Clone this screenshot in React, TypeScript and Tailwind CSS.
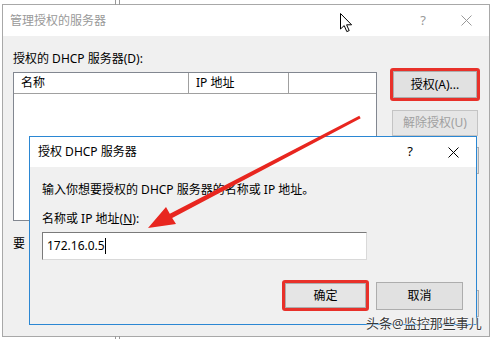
import React from "react";

const CloseIcon = ({ color }: { color: string }) => (
  <svg width="11" height="11" viewBox="0 0 11 11">
    <path d="M0.5 0.5 L10.5 10.5 M10.5 0.5 L0.5 10.5" stroke={color} strokeWidth="1" fill="none" />
  </svg>
);

const Cursor = () => (
  <svg width="13" height="20" viewBox="0 0 13 20" className="absolute left-[340px] top-[13px]">
    <path
      d="M0.5 0.5 L0.5 16 L4.2 12.6 L6.8 18.6 L9.2 17.6 L6.6 11.8 L11.6 11.8 Z"
      fill="#fff"
      stroke="#000"
      strokeWidth="1"
      strokeLinejoin="round"
    />
  </svg>
);

const RedArrow = () => (
  <svg width="492" height="339" className="absolute left-0 top-0 pointer-events-none">
    <polygon
      points="148,228 176,224 172.2,218.1 360.7,118.3 359.3,115.7 169.8,213.7 166,207"
      fill="#e8261f"
    />
  </svg>
);

const App = () => {
  return (
    <div className="relative w-[492px] h-[339px] bg-white overflow-hidden font-['Noto_Sans','Noto_Sans_CJK_SC',sans-serif] text-[12px] text-black">
      {/* resize marks on the window edges */}
      <div className="absolute left-[115px] top-0 h-[5px] w-[5px] border-x border-[#999]" />
      <div className="absolute left-[115px] top-[336px] h-[3px] w-[5px] border-x border-[#999]" />

      {/* main window */}
      <div className="ml-[2px] mt-[4px] w-[488px] h-[333px] border border-[#a8a8a8] flex flex-col">
        <div className="h-[31px] bg-white flex items-center pl-[7px] text-[#999]">
          <span className="leading-[16px]">管理授权的服务器</span>
          <div className="ml-auto flex items-center h-full">
            <div className="w-[42px] flex justify-center text-[13px] text-[#999]">?</div>
            <div className="w-[45px] flex justify-center">
              <CloseIcon color="#999" />
            </div>
          </div>
        </div>

        <div className="flex-1 bg-[#f0f0f0] flex pl-[10px]">
          <div className="w-[364px] pt-[15px] flex flex-col">
            <div className="leading-[16px] h-[16px]">授权的 DHCP 服务器(D):</div>
            <div className="mt-[5px] h-[149px] bg-white border border-[#828790]">
              <div className="flex h-[21px] border-b border-[#a0a0a0] leading-[20px]">
                <div className="w-[175px] border-r border-[#a0a0a0] pl-[7px]">名称</div>
                <div className="w-[100px] border-r border-[#a0a0a0] pl-[7px]">IP 地址</div>
                <div className="flex-1" />
              </div>
            </div>
            <div className="mt-[15px] leading-[16px]">要</div>
          </div>

          <div className="ml-[13px] pt-[32px] flex flex-col">
            <div className="w-[90px] h-[33px] border-[3px] border-[#e8312a] rounded-[3px] flex">
              <div className="flex-1 bg-[#e1e1e1] border border-[#adadad] flex items-center justify-center">
                授权(A)...
              </div>
            </div>
            <div className="ml-[2px] mt-[9px] w-[86px] h-[26px] bg-[#e6e6e6] border border-[#c4c4c4] flex items-center justify-center text-[#a0a0a0]">
              解除授权(U)
            </div>
            <div className="ml-[2px] mt-[11px] w-[87px] h-[27px] bg-[#e1e1e1] border border-[#adadad]" />
            <div className="ml-[2px] mt-[116px] w-[87px] h-[27px] bg-[#e1e1e1] border border-[#adadad]" />
          </div>
        </div>
      </div>

      {/* authorize dialog */}
      <div className="absolute left-[29px] top-[136px] w-[448px] h-[189px] border border-[#2b87d3] flex flex-col">
        <div className="h-[30px] bg-white flex items-center pl-[8px]">
          <span className="leading-[16px]">授权 DHCP 服务器</span>
          <div className="ml-auto flex items-center h-full">
            <div className="w-[40px] flex justify-center text-[13px]">?</div>
            <div className="w-[46px] flex justify-center">
              <CloseIcon color="#000" />
            </div>
          </div>
        </div>
        <div className="flex-1 bg-[#f0f0f0] pl-[12px] pt-[15px] flex flex-col">
          <div className="leading-[16px]">输入你想要授权的 DHCP 服务器的名称或 IP 地址。</div>
          <div className="mt-[13px] leading-[16px]">
            名称或 IP 地址(<span className="underline">N</span>):
          </div>
          <div className="mt-[5px] w-[325px] h-[28px] bg-white border border-[#7a7a7a] border-b-[#d9d9d9] border-r-[#d9d9d9] flex items-center pl-[4px]">
            <span className="leading-[16px]">172.16.0.5</span>
            <span className="w-px h-[16px] bg-black" />
          </div>
          <div className="mt-[20px] flex items-center justify-end pr-[13px] gap-[7px]">
            <div className="w-[87px] h-[31px] border-[3px] border-[#e8312a] rounded-[3px] flex">
              <div className="flex-1 bg-[#e5e5e5] border border-[#adadad] flex items-center justify-center">
                确定
              </div>
            </div>
            <div className="w-[87px] h-[28px] bg-[#e1e1e1] border border-[#adadad] flex items-center justify-center">
              取消
            </div>
          </div>
        </div>
      </div>

      <Cursor />
      <RedArrow />

      <div className="absolute left-[366px] top-[314px] text-[13px] leading-[18px] text-[#3a3a3a] [text-shadow:0_0_2px_#fff,0_0_2px_#fff,0_0_1px_#fff]">
        头条@监控那些事儿
      </div>
    </div>
  );
};

export default App;
